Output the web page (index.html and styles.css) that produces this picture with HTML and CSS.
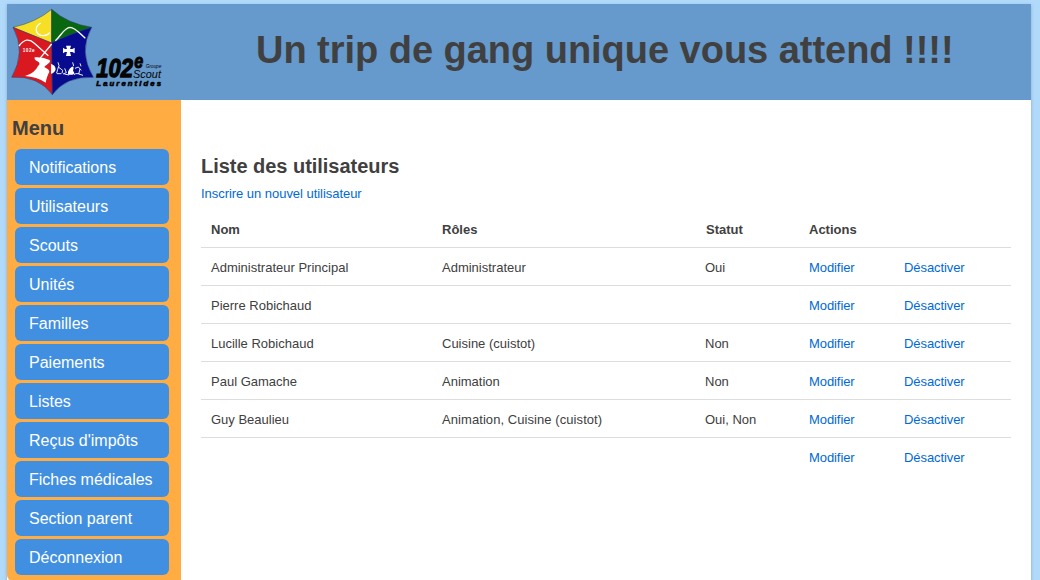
FILE: index.html
```html
<!DOCTYPE html>
<html lang="fr">
<head>
<meta charset="utf-8">
<title>Liste des utilisateurs</title>
<link rel="stylesheet" href="styles.css">
</head>
<body>
<div class="page">
  <header class="banner">
    <svg class="logo" viewBox="21 12 480 288" role="img" aria-label="102e Groupe Scout Laurentides">
      <g stroke="#243f70" stroke-width="1.5">
        <path d="M155 28Q108 67 39 82Q102 108 155 129Z" fill="#f6df24"/>
        <path d="M155 28Q200 70 275 82Q205 104 155 129Z" fill="#08670f"/>
        <path d="M155 129Q102 108 39 82Q79 155 35 232Q115 226 157 284Z" fill="#d91820"/>
        <path d="M155 129Q205 104 275 82Q234 155 280 232Q198 228 157 284Z" fill="#080b8e"/>
      </g>
      <path d="M122 69C102 80 105 105 128 107Q142 108 149 98" fill="none" stroke="#fff" stroke-width="4"/>
      <path d="M57 138Q80 107 103 130L145 167M120 175L155 132M166 122C184 107 192 83 210 82C226 83 237 98 256 115" fill="none" stroke="#fff" stroke-width="4"/>
      <path d="M104 172Q128 170 149 180C154 190 136 194 133 201C139 206 148 207 148 216C143 224 139 237 137 248Q110 230 75 228Q104 220 114 198Q124 190 112 184Q102 180 104 172ZM153 192Q166 195 167 208Q164 220 153 221Z" fill="#fff"/>
      <path d="M198 137H213L210 147H217L224 143V160L217 156H210L213 168H198L201 156H195L189 160V143L195 147H201Z" fill="#fff"/>
      <g fill="none" stroke="#e9edff" stroke-width="3"><path d="M174 187L177 197L173 208L170 219M175 201L188 211L186 220M194 205L199 218L189 222M209 211L204 224M218 215L225 225M225 205L235 201L244 211M240 207L236 222L249 226M240 190L243 199M218 187L221 198M193 222L207 225M170 221H184M226 221H238"/></g>
      <path d="M209 206Q225 190 219 212Q227 221 217 224H207Q200 218 209 206" fill="#fff"/>
      <text class="logo-small" x="68" y="155" textLength="36">102e</text>
      <text class="logo-number" x="289" y="231" textLength="110" lengthAdjust="spacingAndGlyphs">102</text>
      <text class="logo-e" x="403" y="203" textLength="27" lengthAdjust="spacingAndGlyphs">e</text>
      <text class="logo-group" x="437" y="205" textLength="47" lengthAdjust="spacingAndGlyphs">Groupe</text>
      <text class="logo-scout" x="399" y="234" textLength="84" lengthAdjust="spacingAndGlyphs">Scout</text>
      <text class="logo-place" x="289" y="259" textLength="194">Laurentides</text>
    </svg>
    <h1 class="title">Un trip de gang unique vous attend !!!!</h1>
  </header>
  <div class="body">
    <nav class="sidebar">
      <h2 class="menu-title">Menu</h2>
      <ul class="menu">
        <li class="item">Notifications</li>
        <li class="item">Utilisateurs</li>
        <li class="item">Scouts</li>
        <li class="item">Unités</li>
        <li class="item">Familles</li>
        <li class="item">Paiements</li>
        <li class="item">Listes</li>
        <li class="item">Reçus d'impôts</li>
        <li class="item">Fiches médicales</li>
        <li class="item">Section parent</li>
        <li class="item">Déconnexion</li>
      </ul>
    </nav>
    <main class="content">
      <h2 class="heading">Liste des utilisateurs</h2>
      <a class="link create" href="#">Inscrire un nouvel utilisateur</a>
      <table class="users">
        <colgroup><col class="c-name"><col class="c-roles"><col class="c-status"><col class="c-edit"><col class="c-off"></colgroup>
        <thead><tr><th>Nom</th><th>Rôles</th><th class="status-head">Statut</th><th>Actions</th><th></th></tr></thead>
        <tbody>
          <tr><td>Administrateur Principal</td><td>Administrateur</td><td>Oui</td><td><a class="link" href="#">Modifier</a></td><td><a class="link" href="#">Désactiver</a></td></tr>
          <tr><td>Pierre Robichaud</td><td></td><td></td><td><a class="link" href="#">Modifier</a></td><td><a class="link" href="#">Désactiver</a></td></tr>
          <tr><td>Lucille Robichaud</td><td>Cuisine (cuistot)</td><td>Non</td><td><a class="link" href="#">Modifier</a></td><td><a class="link" href="#">Désactiver</a></td></tr>
          <tr><td>Paul Gamache</td><td>Animation</td><td>Non</td><td><a class="link" href="#">Modifier</a></td><td><a class="link" href="#">Désactiver</a></td></tr>
          <tr><td>Guy Beaulieu</td><td class="long">Animation, Cuisine (cuistot)</td><td>Oui, Non</td><td><a class="link" href="#">Modifier</a></td><td><a class="link" href="#">Désactiver</a></td></tr>
          <tr><td></td><td></td><td></td><td><a class="link" href="#">Modifier</a></td><td><a class="link" href="#">Désactiver</a></td></tr>
        </tbody>
      </table>
    </main>
  </div>
</div>
</body>
</html>
```
FILE: styles.css
```css
* { box-sizing: border-box; }
html { overflow: hidden; }
body {
  margin: 0;
  padding: 4px 9px 0 7px;
  height: 580px;
  overflow: hidden;
  background: #b1d9fa;
  color: #404040;
  font: 13px/18px "Liberation Sans", Arial, sans-serif;
}
.page {
  height: 600px;
  background: #fff;
  box-shadow: 0 1px 3px rgba(70, 110, 145, 0.4);
}
.banner {
  display: flex;
  height: 96px;
  background: #6699cc;
}
.logo { width: 160px; height: 96px; flex: none; }
.logo text { font-family: "Liberation Sans", Arial, sans-serif; fill: #050505; }
.logo .logo-small { fill: #fff; font-size: 14px; font-weight: bold; }
.logo .logo-number { font-size: 80px; font-weight: bold; font-style: italic; stroke: #050505; stroke-width: 4px; }
.logo .logo-e { font-size: 62px; font-weight: bold; font-style: italic; stroke: #050505; stroke-width: 3px; }
.logo .logo-group { font-size: 14px; font-style: italic; }
.logo .logo-scout { font-size: 34px; font-style: italic; }
.logo .logo-place { font-size: 23px; font-weight: bold; font-style: italic; stroke: #050505; stroke-width: 2px; }
.title {
  margin: 0;
  padding: 22px 0 0 89px;
  font-size: 38px;
  line-height: 48px;
  letter-spacing: -0.03px;
  white-space: nowrap;
}
.body { display: flex; align-items: flex-start; }
.sidebar {
  width: 174px;
  height: 481px;
  padding: 16px 12px 0 8px;
  background: #ffac42;
  border-bottom-left-radius: 6px;
}
.menu-title { margin: 0 0 9px -3px; font-size: 20px; line-height: 24px; }
.menu { display: flex; flex-direction: column; gap: 3px; margin: 0; padding: 0; list-style: none; }
.item {
  height: 36px;
  padding-left: 14px;
  border-radius: 6px;
  background: #418fe1;
  color: #fff;
  font-size: 16px;
  line-height: 38px;
}
.content { flex: 1; padding: 54px 20px 0; }
.heading { margin: 0 0 7px; font-size: 20px; line-height: 24px; letter-spacing: -0.03px; }
.link { color: #0069d6; text-decoration: none; }
.create { display: block; letter-spacing: -0.04px; }
.users { width: 810px; margin-top: 6px; table-layout: fixed; border-collapse: collapse; }
.c-name { width: 231px; }
.c-roles { width: 263px; }
.c-status { width: 104px; }
.c-edit { width: 95px; }
.c-off { width: 117px; }
.users th, .users td { height: 38px; padding: 4px 10px 0; text-align: left; vertical-align: middle; }
.users tbody td { border-top: 1px solid #ddd; }
.users .status-head { padding-left: 11px; }
.users .link { letter-spacing: -0.08px; }
.users .long { letter-spacing: 0.07px; }
```
